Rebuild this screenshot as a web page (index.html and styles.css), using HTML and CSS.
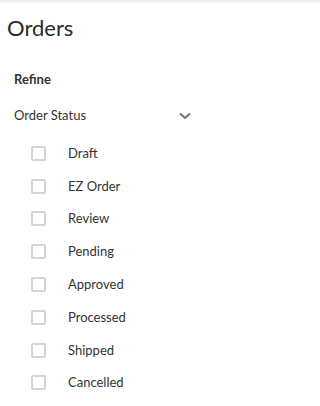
FILE: index.html
```html
<!DOCTYPE html>
<html>
<head>
<meta charset="utf-8">
<link rel="stylesheet" href="styles.css">
</head>
<body>
<div class="shade"></div>
<main class="page">
  <h1 class="title">Orders</h1>
  <h2 class="refine">Refine</h2>
  <div class="filter-head">
    <span>Order Status</span>
    <svg class="chev" width="12" height="8" viewBox="0 0 12 8"><path d="M1 1.5 L6 6 L11 1.5" fill="none" stroke="#707070" stroke-width="2"/></svg>
  </div>
  <ul class="options">
    <li class="option"><span class="box"></span><span class="label">Draft</span></li>
    <li class="option"><span class="box"></span><span class="label">EZ Order</span></li>
    <li class="option"><span class="box"></span><span class="label">Review</span></li>
    <li class="option"><span class="box"></span><span class="label">Pending</span></li>
    <li class="option"><span class="box"></span><span class="label">Approved</span></li>
    <li class="option"><span class="box"></span><span class="label">Processed</span></li>
    <li class="option"><span class="box"></span><span class="label">Shipped</span></li>
    <li class="option"><span class="box"></span><span class="label">Cancelled</span></li>
  </ul>
</main>
</body>
</html>
```
FILE: styles.css
```css
html, body {
  margin: 0;
  padding: 0;
  background: #fff;
}
body {
  font-family: Lato, "Liberation Sans", sans-serif;
  color: #333;
  height: 406px;
  overflow: hidden;
  position: relative;
}
.shade {
  position: absolute;
  top: 0;
  left: 0;
  right: 0;
  height: 4px;
  background: linear-gradient(to bottom, rgba(0,0,0,0.07), rgba(0,0,0,0));
}
.page {
  padding: 15px 0 0 0;
}
.title {
  margin: 0 0 0 7px;
  font-size: 22px;
  font-weight: 400;
  line-height: 26px;
  color: #2b2b2b;
}
.refine {
  margin: 31px 0 0 14px;
  font-size: 13px;
  font-weight: 700;
  line-height: 15px;
  color: #333;
}
.filter-head {
  margin: 20px 0 0 14px;
  width: 177px;
  display: flex;
  align-items: center;
  justify-content: space-between;
  font-size: 13px;
  line-height: 16px;
  color: #333;
}
.chev {
  display: block;
  margin-top: 2px;
}
.options {
  list-style: none;
  margin: 14px 0 0 0;
  padding: 0 0 0 31px;
}
.option {
  display: flex;
  align-items: center;
  height: 32.8px;
}
.box {
  box-sizing: border-box;
  width: 15px;
  height: 15px;
  border: 2px solid #d4d4d4;
  border-radius: 2px;
  flex: none;
}
.label {
  margin-left: 22px;
  margin-top: -1px;
  font-size: 13px;
  color: #333;
}
```
